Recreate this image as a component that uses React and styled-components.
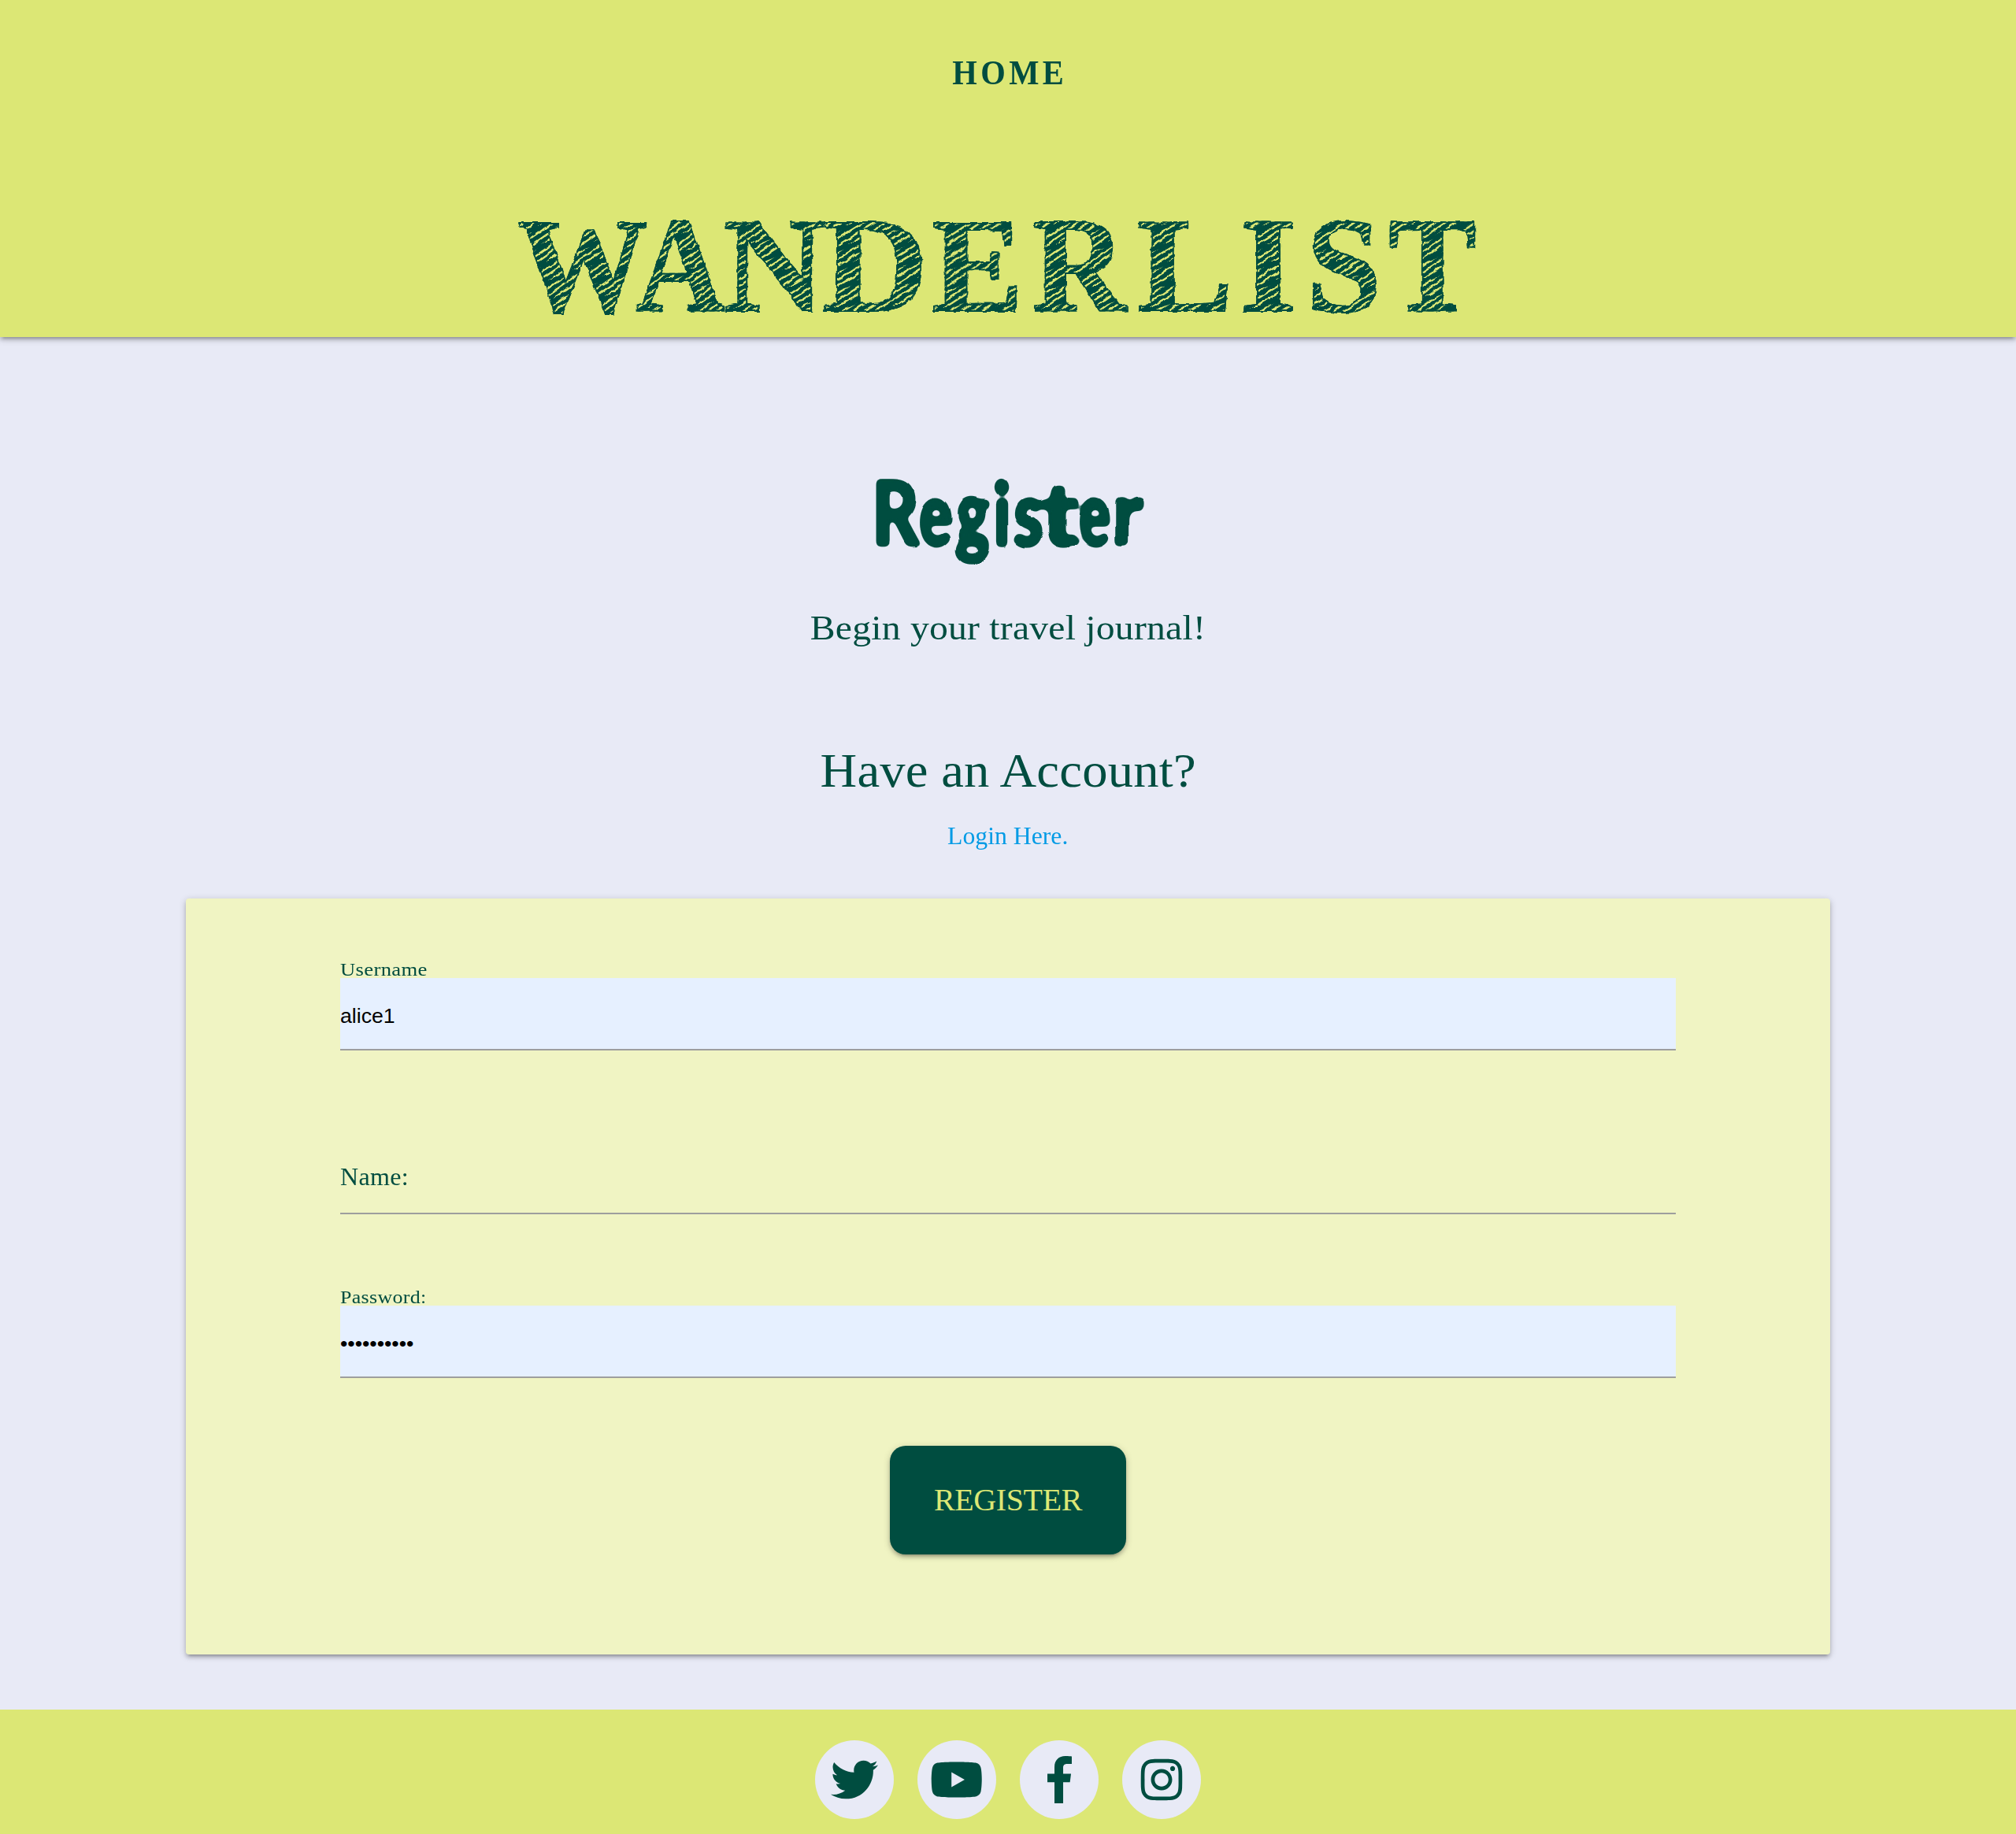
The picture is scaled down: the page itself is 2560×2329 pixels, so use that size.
import React from "react";
import styled, { createGlobalStyle } from "styled-components";
import { FaTwitter, FaYoutube, FaInstagram } from "react-icons/fa";

const lime = "#dce775";
const teal = "#004d40";
const mist = "#e8eaf6";
const depth =
  "0 4px 4px 0 rgba(0,0,0,.14), 0 6px 2px -4px rgba(0,0,0,.12), 0 2px 10px 0 rgba(0,0,0,.2)";

const GlobalStyle = createGlobalStyle`
  * { box-sizing: border-box; }
  body {
    margin: 0;
    background: ${mist};
    color: ${teal};
    font-family: "Liberation Serif", serif;
  }
`;

const Page = styled.div`
  display: flex;
  flex-direction: column;
  min-height: 2329px;
`;

const Header = styled.header`
  display: flex;
  flex-direction: column;
  align-items: center;
  height: 428px;
  padding-top: 62px;
  background: ${lime};
  box-shadow: ${depth};
`;

const HomeLink = styled.a`
  font-size: 45px;
  font-weight: 700;
  line-height: 60px;
  letter-spacing: 5px;
  margin-right: -5px;
  transform: scaleX(0.9);
  color: ${teal};
`;

const Brand = styled.h1`
  display: flex;
  margin: 126px 33px 0 0;
  font-size: 171px;
  line-height: 180px;
  font-weight: 700;
  filter: url(#sketch);
`;

const Letter = styled.span`
  display: block;
  flex: none;
  width: ${(p) => p.$advance}px;
  white-space: nowrap;
  transform: scaleX(${(p) => p.$stretch});
  transform-origin: left center;
`;

const HatchedLetter = styled(Letter)`
  & > span {
    display: inline-block;
    background-image:
      repeating-linear-gradient(146deg, ${teal} 0 3.6px, transparent 4.4px 6px, ${teal} 6.8px 7.2px),
      repeating-linear-gradient(158deg, ${teal} 0 4px, transparent 5px 23px);
    -webkit-background-clip: text;
    background-clip: text;
    -webkit-text-fill-color: transparent;
    -webkit-text-stroke: 1.8px ${teal};
  }
`;

const Main = styled.main`
  display: flex;
  flex-direction: column;
  align-items: center;
  height: 1743px;
  padding-top: 161px;
`;

const Heading = styled.h2`
  display: flex;
  margin: 0 0 58px -4px;
  font-family: Lato, sans-serif;
  font-size: 114px;
  line-height: 120px;
  font-weight: 900;
  -webkit-text-stroke: 3px ${teal};
  filter: url(#brush);
`;

const Lead = styled.p`
  margin: 0 0 112px;
  font-size: 45px;
  line-height: 60px;
  letter-spacing: 0.2px;
  transform: scaleX(1.06);
`;

const Question = styled.p`
  margin: 0 0 23px;
  font-size: 61px;
  line-height: 80px;
  letter-spacing: 0.2px;
  transform: scaleX(1.06);
`;

const LoginLink = styled.a`
  font-size: 30.5px;
  line-height: 40px;
  transform: scaleX(1.04);
  color: #039be5;
`;

const Card = styled.form`
  display: flex;
  flex-direction: column;
  align-items: center;
  width: 2088px;
  height: 960px;
  margin-top: 59px;
  padding: 79px 196px 0;
  border-radius: 4px;
  background: #f0f4c3;
  box-shadow: ${depth};
`;

const Field = styled.div`
  display: flex;
  flex-direction: column;
  width: 100%;
  margin-top: ${(p) => p.$gap || 0}px;
`;

const Label = styled.label`
  align-self: flex-start;
  font-size: ${(p) => (p.$large ? 30.5 : 24)}px;
  line-height: ${(p) => (p.$large ? 40 : 22)}px;
  letter-spacing: 0.3px;
  transform: scaleX(${(p) => p.$stretch});
  transform-origin: left center;
`;

const Input = styled.input`
  width: 100%;
  height: ${(p) => (p.$filled ? 92 : 27)}px;
  padding: ${(p) => (p.$filled ? "6px 0 0" : "0")};
  border: 0;
  border-bottom: 2px solid #9e9e9e;
  border-radius: 0;
  outline: none;
  background: ${(p) => (p.$filled ? "#e6f0ff" : "transparent")};
  color: #000;
  font-family: "Liberation Sans", sans-serif;
  font-size: 26.67px;
`;

const Submit = styled.button`
  width: 300px;
  height: 138px;
  margin-top: 86px;
  padding: 0 0 2px;
  border: 0;
  border-radius: 20px;
  background: ${teal};
  color: ${lime};
  box-shadow: ${depth};
  font-family: "Liberation Serif", serif;
  font-size: 40px;
  letter-spacing: -0.4px;
`;

const Footer = styled.footer`
  display: flex;
  justify-content: center;
  gap: 30px;
  height: 158px;
  padding-top: 39px;
  background: ${lime};
`;

const Social = styled.a`
  display: flex;
  align-items: center;
  justify-content: center;
  width: 100px;
  height: 100px;
  border-radius: 50%;
  background: ${mist};
  color: ${teal};

  svg {
    flex: none;
    height: 60px;
    width: ${(p) => p.$iconWidth}px;
    fill: currentColor;
  }
`;

const Filters = styled.svg`
  position: absolute;
`;

const brandLetters = [
  ["W", 150, 0.97],
  ["A", 112, 0.92],
  ["N", 125, 1.04],
  ["D", 139, 1.09],
  ["E", 128, 1.02],
  ["R", 133, 0.96],
  ["L", 130, 1.07],
  ["I", 85, 1.1],
  ["S", 104, 1],
  ["T", 107, 0.98],
];

const headingLetters = [
  ["R", 60, 0.82],
  ["e", 46, 0.68],
  ["g", 48, 0.72],
  ["i", 26, 0.78],
  ["s", 35, 0.75],
  ["t", 46, 1.1],
  ["e", 44, 0.68],
  ["r", 38, 0.92],
];

const FacebookIcon = () => (
  <svg viewBox="0 0 264 512">
    <path d="M76.7 512V283H0v-91h76.7v-71.7C76.7 42.4 124.3 0 193.8 0c33.3 0 61.9 2.5 70.2 3.6V85h-48.2c-37.8 0-45.1 18-45.1 44.3V192H256l-11.7 91h-73.6v229" />
  </svg>
);

export default function App() {
  return (
    <Page>
      <GlobalStyle />
      <Filters width="0" height="0" aria-hidden="true">
        <filter id="sketch" x="-2%" y="-5%" width="104%" height="110%">
          <feTurbulence type="fractalNoise" baseFrequency="0.1" numOctaves="2" seed="4" />
          <feDisplacementMap in="SourceGraphic" scale="5" xChannelSelector="R" yChannelSelector="G" />
        </filter>
        <filter id="brush" x="-5%" y="-10%" width="110%" height="120%">
          <feGaussianBlur in="SourceGraphic" stdDeviation="3" />
          <feComponentTransfer result="round">
            <feFuncA type="linear" slope="8" intercept="-3.2" />
          </feComponentTransfer>
          <feTurbulence type="fractalNoise" baseFrequency="0.02" numOctaves="1" seed="8" />
          <feDisplacementMap in="round" scale="8" xChannelSelector="R" yChannelSelector="G" />
        </filter>
      </Filters>
      <Header>
        <HomeLink>HOME</HomeLink>
        <Brand>
          {brandLetters.map(([char, advance, stretch]) => (
            <HatchedLetter key={char} $advance={advance} $stretch={stretch}>
              <span>{char}</span>
            </HatchedLetter>
          ))}
        </Brand>
      </Header>
      <Main>
        <Heading>
          {headingLetters.map(([char, advance, stretch], i) => (
            <Letter key={i} $advance={advance} $stretch={stretch}>
              {char}
            </Letter>
          ))}
        </Heading>
        <Lead>Begin your travel journal!</Lead>
        <Question>Have an Account?</Question>
        <LoginLink>Login Here.</LoginLink>
        <Card>
          <Field>
            <Label htmlFor="username" $stretch={1.11}>Username</Label>
            <Input id="username" $filled defaultValue="alice1" />
          </Field>
          <Field $gap={141}>
            <Label htmlFor="name" $large $stretch={1.05}>Name:</Label>
            <Input id="name" />
          </Field>
          <Field $gap={94}>
            <Label htmlFor="password" $stretch={1.08}>Password:</Label>
            <Input id="password" type="password" $filled defaultValue="wanderlist" />
          </Field>
          <Submit type="button">REGISTER</Submit>
        </Card>
      </Main>
      <Footer>
        <Social $iconWidth={60}><FaTwitter /></Social>
        <Social $iconWidth={67.5}><FaYoutube /></Social>
        <Social $iconWidth={31}><FacebookIcon /></Social>
        <Social $iconWidth={60}><FaInstagram /></Social>
      </Footer>
    </Page>
  );
}
